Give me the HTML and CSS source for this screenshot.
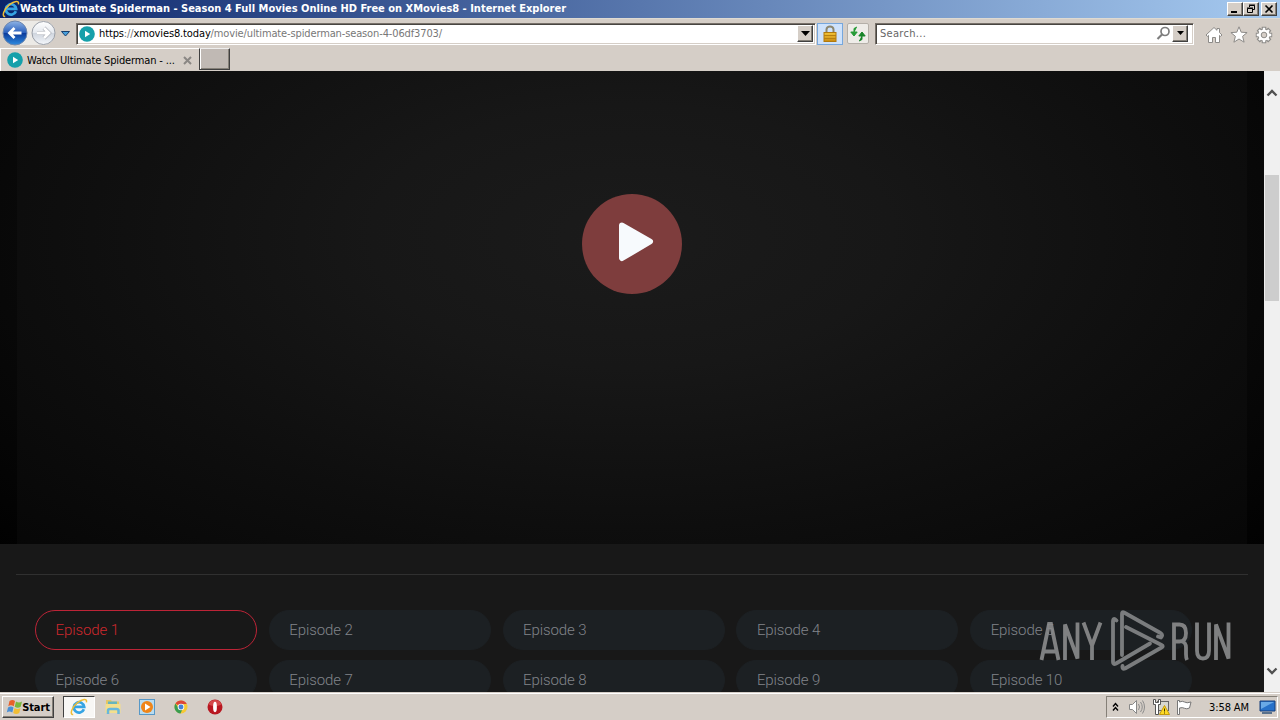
FILE: index.html
```html
<!DOCTYPE html>
<html lang="en">
<head>
<meta charset="utf-8">
<title>Watch Ultimate Spiderman - Season 4 Full Movies Online HD Free on XMovies8</title>
<link rel="stylesheet" href="styles.css">
</head>
<body>
<svg width="0" height="0" class="defs">
  <defs>
    <linearGradient id="blue" x1="0" y1="0" x2="0" y2="1"><stop offset="0" stop-color="#8fb4e6"/><stop offset=".48" stop-color="#2c61bd"/><stop offset=".52" stop-color="#0c3c9c"/><stop offset="1" stop-color="#2f8ce0"/></linearGradient>
    <linearGradient id="pale" x1="0" y1="0" x2="0" y2="1"><stop offset="0" stop-color="#fff"/><stop offset=".5" stop-color="#e4e8ee"/><stop offset=".52" stop-color="#cfd5de"/><stop offset="1" stop-color="#f4f7fb"/></linearGradient>
    <linearGradient id="gold" x1="0" y1="0" x2="0" y2="1"><stop offset="0" stop-color="#f3c437"/><stop offset="1" stop-color="#c98a10"/></linearGradient>
    <symbol id="ie" viewBox="0 0 18 18">
      <path d="M13.900 11.300A5.200 5.200 0 1 1 14.200 8.900H5.200" fill="none" stroke="#36a4e3" stroke-width="2.700"/>
      <path d="M3.200 16.600C-.6 17 1.500 9.300 7.500 4.600C12 1 17.600-.2 16.400 4.400" fill="none" stroke="#efbd35" stroke-width="1.500"/>
    </symbol>
    <symbol id="site" viewBox="0 0 16 16"><circle cx="8" cy="8" r="7.800" fill="#16a0aa"/><path d="M6 4.800L11.200 8L6 11.200Z" fill="#fff"/></symbol>
  </defs>
</svg>
<header class="titlebar">
  <svg class="title-icon" width="18" height="18"><use href="#ie"/></svg>
  <span class="title-text">Watch Ultimate Spiderman - Season 4 Full Movies Online HD Free on XMovies8 - Internet Explorer</span>
  <div class="window-buttons">
    <button class="win-btn"><svg width="14" height="12"><path d="M3 8h6v2H3z"/></svg></button>
    <button class="win-btn"><svg width="14" height="12"><path d="M5.500 4V2.500h5v4H9M5 2h6" fill="none" stroke="#000"/><path d="M3.500 5.500h5v4h-5zM3 5h6" fill="none" stroke="#000"/></svg></button>
    <button class="win-btn close"><svg width="14" height="12"><path d="M3.500 2.500l7 7m0-7l-7 7" stroke="#000" stroke-width="1.600"/></svg></button>
  </div>
</header>
<nav class="toolbar">
  <svg class="history" width="76" height="30" viewBox="0 0 76 30">
    <path d="M15 3h28a12 12 0 0 1 0 24H15z" fill="#eceae6"/>
    <circle cx="15" cy="15" r="12" fill="url(#blue)" stroke="#6d86ae"/>
    <path d="M21.500 15H10M14.500 10L9.500 15l5 5" fill="none" stroke="#fff" stroke-width="2.800"/>
    <circle cx="43.500" cy="15" r="11.500" fill="url(#pale)" stroke="#9a9fa8"/>
    <path d="M37 15h11.500M44 10l5 5-5 5" fill="none" stroke="#a9adb5" stroke-width="4"/>
    <path d="M37 15h11M44 10l5 5-5 5" fill="none" stroke="#fff" stroke-width="2.800"/>
    <path d="M61.500 13.500h8L65.500 18z" fill="#48a0dc" stroke="#17406f"/>
  </svg>
  <div class="field address">
    <svg class="site-icon" width="16" height="16"><use href="#site"/></svg>
    <span class="url"><span class="host-scheme">https</span>://<span class="host">xmovies8.today</span><span class="path">/movie/ultimate-spiderman-season-4-06df3703/</span></span>
    <button class="drop"><svg width="9" height="6"><path d="M0 0h9L4.500 5z"/></svg></button>
  </div>
  <button class="lock"><svg width="16" height="18"><path d="M4.500 9V4.500a3.500 3 0 0 1 7 0V9" fill="none" stroke="#8d876f" stroke-width="2"/><rect x="2" y="7.500" width="12" height="9" fill="url(#gold)" stroke="#b1790d"/><path d="M2 10.500h12M2 13.500h12" stroke="#b8800f"/></svg></button>
  <button class="refresh"><svg width="18" height="18"><path d="M8 2L5 3.500V8M1.800 7h6.400L5 11z" fill="#269b37" stroke="#269b37"/><path d="M10 16l3-1.500V10M9.800 11h6.400L13 7z" fill="#168428" stroke="#168428"/></svg></button>
  <div class="field search">
    <span class="placeholder">Search...</span>
    <svg class="lens" width="15" height="15"><circle cx="9" cy="5.500" r="4" fill="none" stroke="#7d7d7d" stroke-width="1.700"/><path d="M6 8.500L1.500 13" stroke="#7d7d7d" stroke-width="2.200"/></svg>
    <button class="drop"><svg width="7" height="5"><path d="M0 0h7L3.500 4z"/></svg></button>
  </div>
  <div class="tools">
    <svg width="18" height="18"><path d="M9 1.500L1 9l1.400 1.400L3.500 9.400V16.500h4v-5h3v5h4V9.400l1.100 1L17 9L14.500 6.600V2.500h-2.500v1.800z" fill="#fff" stroke="#8d8b88"/></svg>
    <svg width="18" height="18"><path d="M9 .8l2.200 5.400 5.900.4-4.500 3.700 1.500 5.900L9 13l-5.100 3.200 1.500-5.900L.9 6.600l5.900-.4z" fill="#fff" stroke="#8d8b88"/></svg>
    <svg width="18" height="18"><g fill="none" stroke="#8d8b88" stroke-width="4.600"><path d="M9 .8v16.400M.8 9h16.400M3.200 3.200l11.600 11.600M3.200 14.800L14.800 3.200"/></g><circle cx="9" cy="9" r="6.500" fill="#8d8b88"/><g fill="none" stroke="#fff" stroke-width="2.400"><path d="M9 1.700v14.600M1.700 9h14.600M4 4l10 10M4 14L14 4"/></g><circle cx="9" cy="9" r="5.600" fill="#fff"/><circle cx="9" cy="9" r="2.800" fill="#d5cec7" stroke="#8d8b88"/></svg>
  </div>
</nav>
<div class="tabs">
  <div class="tab"><svg width="16" height="16"><use href="#site"/></svg><span class="tab-text">Watch Ultimate Spiderman - ...</span><svg class="tab-close" width="9" height="9"><path d="M1 1l7 7m0-7l-7 7" stroke="#8a8784" stroke-width="2"/></svg></div>
  <button class="new-tab"></button>
</div>
<div class="viewport">
  <main class="page">
    <section class="player">
      <div class="stage">
        <button class="play"><svg width="100" height="100"><path d="M40 31.500L68 47.500L40 64z" fill="#f7fafd" stroke="#f7fafd" stroke-width="6" stroke-linejoin="round"/></svg></button>
      </div>
    </section>
    <hr class="divider">
    <section class="episodes">
      <a class="episode active">Episode 1</a><a class="episode">Episode 2</a><a class="episode">Episode 3</a><a class="episode">Episode 4</a><a class="episode">Episode 5</a>
      <a class="episode">Episode 6</a><a class="episode">Episode 7</a><a class="episode">Episode 8</a><a class="episode">Episode 9</a><a class="episode">Episode 10</a>
    </section>
    <svg class="watermark" width="196" height="66" viewBox="0 0 196 66">
      <g fill="none" stroke="#8b8c8d" stroke-width="3.800">
        <path d="M4.500 53L12 17h2L21.500 53M7 44.500h12"/>
        <path d="M28 53V17.500l12.500 34V15.500"/>
        <path d="M46.500 15.500L55 38.500V53M63.500 15.500L55 38.500"/>
        <path d="M137 53V17.500h5.500q6.500 0 6.500 8.500t-6.500 8.500H137M145 34.500q4 1 4 6V47q0 4 1 6"/>
        <path d="M160 15.500v28q0 8 6 8t6-8V15.500"/>
        <path d="M179 53V17.500l12.500 34V15.500"/>
      </g>
      <g fill="none" stroke="#858788" stroke-width="3.800" stroke-linecap="round" stroke-linejoin="round">
        <path d="M85 48V7q0-2.500 2-1.500L123.500 26q3 2 .5 4.500l-3-1"/>
        <path d="M79.500 13.500q-3.500-3.500-3.500 1v40.500q0 3 3 1.500L113 36.500"/>
        <path d="M89 20L124.500 38q2.500 1.200 0 2.500L88 61.500q-3 1-2.500-2.500"/>
      </g>
    </svg>
  </main>
  <aside class="scrollbar">
    <svg width="12" height="8"><path d="M1.500 6.500L6 2l4.500 4.500" fill="none" stroke="#505050" stroke-width="2.300"/></svg>
    <div class="track"><div class="thumb"></div></div>
    <svg width="12" height="8"><path d="M1.500 1.500L6 6l4.500-4.500" fill="none" stroke="#505050" stroke-width="2.300"/></svg>
  </aside>
</div>
<footer class="taskbar">
  <button class="start"><svg width="16" height="16"><path d="M3.500 2q3-2 5.500 0L7.800 7.200q-3-1.800-5.500 0z" fill="#e8602a"/><path d="M10 2.500q3 2 6 0l-1.300 5.200q-3 2-6 0z" fill="#79b83c"/><path d="M2 8.500q3-2 5.500 0L6.300 13.500q-3-1.800-5.500 0z" fill="#4b8fd5"/><path d="M8.500 9q3 2 6 0l-1.300 5q-3 2-6 0z" fill="#f1be35"/></svg><span>Start</span></button>
  <div class="launch">
    <div class="task current"><svg width="18" height="18"><use href="#ie"/></svg></div>
    <div class="task"><svg width="18" height="18"><path d="M2 2h5l1 1.500h7V14H2z" fill="#e4c765"/><path d="M4 3.500h9v4H4z" fill="#66b5bd"/><path d="M1.500 6h15v9h-15z" fill="#f3df8d"/><path d="M4 16v-3.500q0-1.500 2-1.500h6.500q2 0 2 1.500V16" fill="none" stroke="#68b7dc" stroke-width="2.500"/></svg></div>
    <div class="task"><svg width="18" height="18"><rect x="1.500" y="1.500" width="15" height="15" fill="#b9dcf0" stroke="#5798c7"/><circle cx="9" cy="9" r="6" fill="#ef8519"/><path d="M7 5.500l5.500 3.500L7 12.500z" fill="#fff"/></svg></div>
    <div class="task"><svg width="18" height="18"><circle cx="9" cy="9" r="6.500" fill="#f6c934"/><path d="M9 9L3.400 5.600A6.500 6.500 0 0 1 14.800 6H9z" fill="#dd4638"/><path d="M3.400 5.600A6.500 6.500 0 0 0 8.500 15.500L11 10 6.500 10z" fill="#3a9c50"/><circle cx="9" cy="9" r="3.300" fill="#f4f4f4"/><circle cx="9" cy="9" r="2.400" fill="#4581d7"/></svg></div>
    <div class="task"><svg width="18" height="18"><circle cx="9" cy="9" r="7.500" fill="#b81720"/><path d="M2.500 6.500a7 7 0 0 1 13 0q-6.500 3-13 0" fill="#d4484a"/><ellipse cx="9" cy="9" rx="1.900" ry="5.200" fill="#fff"/></svg></div>
  </div>
  <div class="tray">
    <svg class="chevrons" width="7" height="10"><path d="M1 4.500l2.500-3 2.500 3M1 8.500l2.500-3 2.500 3" fill="none" stroke="#000" stroke-width="1.400"/></svg>
    <svg class="speaker" width="18" height="16"><path d="M1.500 5.500h3L8.500 1.500v13l-4-4h-3z" fill="#fff" stroke="#888"/><path d="M10.500 5q2 3 0 6M12.500 3q3.500 5 0 10M14.500 1.500q4 6.500 0 13" fill="none" stroke="#8c8c8c"/></svg>
    <svg class="network" width="18" height="17"><rect x="4.500" y="2.500" width="11" height="9" fill="#d7d7cf" stroke="#666"/><path d="M.5.500v5h2v10h3v-10h2v-5h-2v3h-3v-3z" fill="#fff" stroke="#555"/><path d="M11.500 6.500l5 9h-10z" fill="#ffda23" stroke="#c49a0b"/><path d="M11.500 9.500v3m0 1v1" stroke="#3b3200"/></svg>
    <svg class="flag" width="18" height="17"><path d="M1.500 15.500V1.500h2V3q3-1.500 5 0t6.500 0L13.500 9q-3 1.500-5 .3T3.500 9v6.500z" fill="#fff" stroke="#777"/></svg>
    <span class="clock">3:58 AM</span>
    <svg class="desktop" width="17" height="14"><path d="M1 1h15v10H1z" fill="#2771c9" stroke="#163e7b"/><path d="M2 2h13L2 9z" fill="#69a9e7"/><path d="M3 13h10" stroke="#59718c" stroke-width="2"/></svg>
  </div>
</footer>
</body>
</html>
```
FILE: styles.css
```css
* { box-sizing: border-box; }
body { margin: 0; width: 1280px; height: 720px; overflow: hidden; display: flex; flex-direction: column; background: #d5cec7; color: #000; font: 11px "DejaVu Sans Condensed", "DejaVu Sans", sans-serif; }
button { padding: 0; margin: 0; border: 0; font: inherit; color: inherit; border-radius: 0; display: flex; align-items: center; justify-content: center; flex: none; }
svg { display: block; flex: none; }
span { white-space: nowrap; }
.defs { position: absolute; }

.titlebar { height: 18px; flex: none; display: flex; align-items: center; padding: 0 3px 0 2px; background: linear-gradient(90deg, #0a246a, #a6caf0); }
.title-icon { margin-top: -1px; }
.title-text { color: #fff; font-weight: bold; line-height: 18px; letter-spacing: 0; }
.window-buttons { display: flex; margin-left: auto; }
.win-btn { width: 16px; height: 14px; background: #d5cec7; border: 1px solid; border-color: #fff #404040 #404040 #fff; box-shadow: inset -1px -1px #858078; }
.win-btn.close { margin-left: 2px; }

.toolbar { height: 30px; flex: none; display: flex; align-items: center; border-top: 1px solid #dedad2; }
.history { margin-top: -1px; }
.field { height: 22px; display: flex; align-items: center; background: #fff; border: 1px solid; border-color: #777069 #fff #fff #777069; box-shadow: inset 1px 1px #484541, inset -1px -1px #d5cec7; }
.address { width: 740px; margin-top: 0; padding: 0 2px 0 2px; }
.url { margin-left: 4px; color: #777; letter-spacing: -0.13px; }
.host, .host-scheme { color: #000; }
.path { color: #777; }
.drop { width: 16px; height: 17px; margin-left: auto; background: #d5cec7; border: 1px solid; border-color: #fff #404040 #404040 #fff; box-shadow: inset -1px -1px #858078; }
.lock { width: 26px; height: 22px; margin: 0 0 0 1px; background: #cee2fb; border: 1px solid #76a7dd; }
.refresh { width: 22px; height: 21px; margin: 0 0 0 4px; background: #eeece8; border: 1px solid #b4afa8; border-radius: 2px; }
.search { width: 319px; margin: 0 0 0 6px; padding: 0 5px 0 4px; color: #666; }
.placeholder { letter-spacing: 0.3px; }
.lens { margin-left: auto; margin-right: 1px; }
.search .drop { margin-left: 0; }
.tools { display: flex; gap: 7px; margin: 3px 0 0 11px; }

.tabs { height: 23px; flex: none; display: flex; }
.tab { width: 199px; display: flex; align-items: center; padding: 0 0 0 6px; border-top: 1px solid #fff; border-left: 1px solid #fff; }
.tab-text { margin-left: 4px; letter-spacing: -0.15px; }
.tab-close { margin-left: 8px; }
.new-tab { width: 31px; height: 22px; background: #c0b9b4; border: 1px solid; border-color: #eee #404040 #404040 #404040; box-shadow: inset 1px 0 #fff, inset -1px -1px #858078; }

.viewport { height: 621px; flex: none; display: flex; }
.page { width: 1264px; position: relative; overflow: hidden; background: #181818; }
.player { height: 473px; padding: 0 17px; background: radial-gradient(ellipse 890px 440px at 632px 170px, #1a1a1a, #010101); }
.stage { height: 473px; display: flex; justify-content: center; padding-top: 123px; background: radial-gradient(ellipse 930px 470px at 50% 165px, #1b1b1b 0%, #171717 28%, #0e0e0e 62%, #050505 100%); }
.play { width: 100px; height: 100px; border-radius: 50%; background: #7e3d3d; }
.divider { height: 1px; border: 0; margin: 30px 16px 35px; background: #303030; }
.episodes { display: grid; grid-template-columns: repeat(5, 222px); column-gap: 11.800px; row-gap: 10px; padding-left: 35px; }
.episode { height: 40px; border: 1px solid #1c2023; border-radius: 20px; background: #1c2023; color: #81848a; padding-left: 19.500px; font: 300 15px/38px Roboto, sans-serif; letter-spacing: -0.1px; }
.episode.active { border-color: #bd2437; background: transparent; color: #ce282e; }
.watermark { position: absolute; left: 1037px; top: 536px; opacity: .9; }
.scrollbar { width: 16px; background: #f0f0f0; display: flex; flex-direction: column; align-items: center; padding: 18px 0 17px; }
.track { flex: 1; width: 100%; padding: 78px 1px 0; }
.thumb { height: 126px; background: #cdcdcd; }

.taskbar { height: 28px; flex: none; display: flex; align-items: center; border-top: 1px solid #d5cec7; box-shadow: inset 0 1px #fff; padding: 1px 2px 0 2px; }
.start { width: 52px; height: 22px; background: #d5cec7; border: 1px solid; border-color: #fff #404040 #404040 #fff; box-shadow: inset -1px -1px #858078; font-weight: bold; }
.start span { font-size: 11px; letter-spacing: -0.1px; }
.launch { display: flex; margin-left: 9px; gap: 2px; }
.task { width: 32px; height: 22px; display: flex; align-items: center; justify-content: center; }
.task.current { background: #f8f7f5; border: 1px solid; border-color: #404040 #fff #fff #404040; }
.tray { height: 22px; width: 172px; margin-left: auto; display: flex; align-items: center; border: 1px solid; border-color: #858078 #fff #fff #858078; padding: 0 1px 0 5px; }
.speaker { margin-left: 9px; }
.network { margin-left: 7px; }
.flag { margin-left: 5px; }
.clock { margin-left: 15px; letter-spacing: -0.1px; }
.desktop { margin-left: auto; }
```
